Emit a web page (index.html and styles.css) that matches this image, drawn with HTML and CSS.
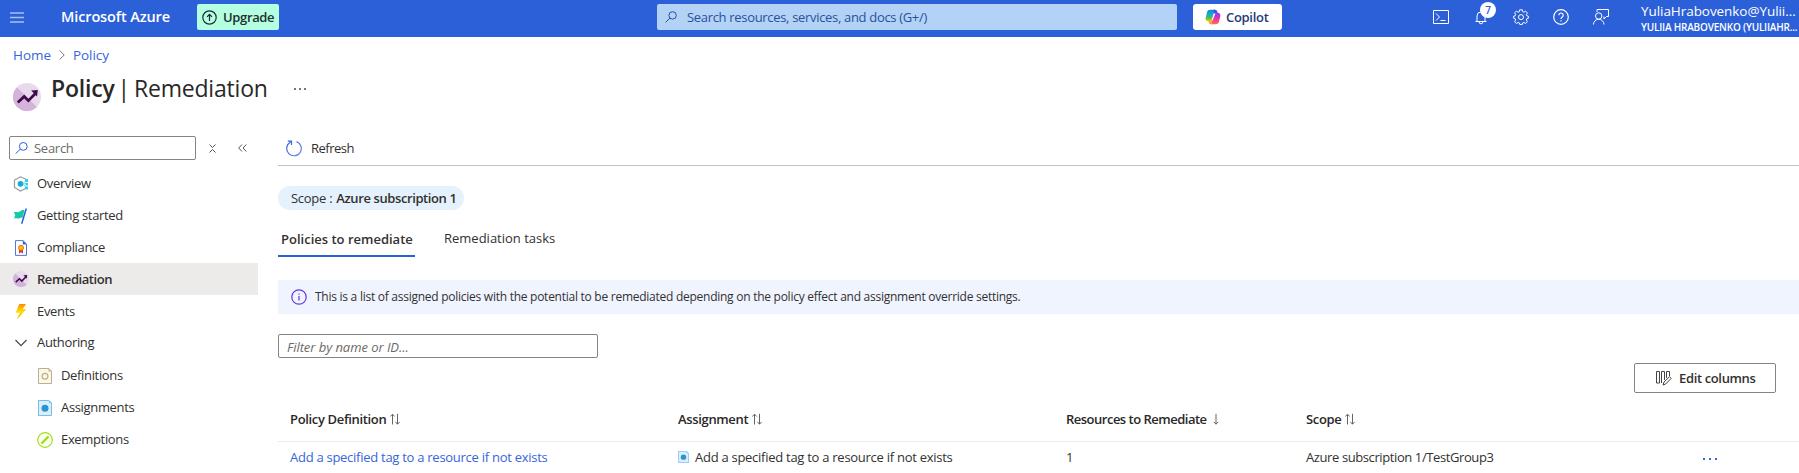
FILE: index.html
```html
<!DOCTYPE html>
<html lang="en">
<head>
<meta charset="utf-8">
<title>Policy | Remediation</title>
<link rel="stylesheet" href="styles.css">
</head>
<body>
<svg class="defs" width="0" height="0" aria-hidden="true">
  <defs>
    <linearGradient id="bolt" x1="0" y1="0" x2="0" y2="1"><stop offset="0" stop-color="#ff8c00"/><stop offset=".5" stop-color="#ffe000"/><stop offset="1" stop-color="#ffb000"/></linearGradient>
    <linearGradient id="ring" x1="0" y1="0" x2="1" y2="1"><stop offset="0" stop-color="#2b60d9"/><stop offset="1" stop-color="#7a86f0"/></linearGradient>
    <linearGradient id="cpl" x1="0" y1="0" x2="0" y2="1"><stop offset="0" stop-color="#1784e8"/><stop offset=".4" stop-color="#12b0c8"/><stop offset=".7" stop-color="#4cc04c"/><stop offset="1" stop-color="#f5c400"/></linearGradient>
    <linearGradient id="cpr" x1="0" y1="0" x2="0" y2="1"><stop offset="0" stop-color="#8a3cf0"/><stop offset=".5" stop-color="#e830b8"/><stop offset="1" stop-color="#ff7040"/></linearGradient>
    <symbol id="trend" viewBox="0 0 28 28"><circle cx="14" cy="14" r="14" fill="#e8d9ec"/><path d="M4 4.2A14 14 0 1 0 23.8 24z" fill="#d3b3da"/><path d="M4.8 19.5l6.400-6 4.200 4.200 7-7.200" fill="none" stroke="#3c0a46" stroke-width="2.700"/><path d="M18.200 7.600l6.600-.6-.8 6.600z" fill="#3c0a46"/></symbol>
    <symbol id="doc-blue" viewBox="0 0 14 16"><path d="M.5.5H11L13.500 3v12.500H.5z" fill="#dbeefa" stroke="#74bfe6"/><path d="M11 .5V3h2.500z" fill="#74bfe6"/><circle cx="7" cy="8.300" r="3.500" fill="#2c93cf"/></symbol>
    <symbol id="sort" viewBox="0 0 10 12"><path d="M2.500 11.500V1.500M.3 3.500l2.200-2.300 2.200 2.300M7.500.8v10.300M5.300 8.900l2.200 2.300 2.200-2.300" fill="none" stroke="#555" stroke-width=".9"/></symbol>
  </defs>
</svg>

<header class="topbar">
  <svg class="burger" width="14" height="11" viewBox="0 0 14 11"><path d="M0 1h14M0 5.500h14M0 10h14" stroke="#a9c0f2" stroke-width="1.600"/></svg>
  <span class="brand">Microsoft Azure</span>
  <button class="upgrade">
    <svg width="15" height="15" viewBox="0 0 15 15" fill="none" stroke="#1d2b2b" stroke-width="1.200"><circle cx="7.500" cy="7.500" r="6.700"/><path d="M7.500 11V4.500M5 6.800l2.500-2.500L10 6.800"/></svg>
    <span>Upgrade</span>
  </button>
  <div class="global-search">
    <svg width="12" height="12" viewBox="0 0 12 12" fill="none" stroke="#2c4f9c"><circle cx="7.600" cy="4.400" r="3.700"/><path d="M5 7L.6 11.400"/></svg>
    <span>Search resources, services, and docs (G+/)</span>
  </div>
  <button class="copilot">
    <svg width="16" height="16" viewBox="0 0 16 16"><path d="M5 .8h5L7.200 12.300H3.500C1.300 12.300.2 10.800.7 8.800L2.100 3C2.500 1.600 3.600.8 5 .8z" fill="url(#cpl)"/><path d="M8.500.8H10c1.300 0 2 .7 2.300 2l.4 1.500H9z" fill="#3558e0"/><path d="M11 15.200H6l3-11.500h3.500c2.200 0 3.300 1.500 2.800 3.500l-1.400 5.800c-.4 1.400-1.500 2.200-2.900 2.200z" fill="url(#cpr)"/><path d="M7.500 15.200H6c-1.300 0-2-.7-2.300-2l-.3-1h3.700z" fill="#ff9a30"/><path d="M8.700 4.500h1.700L7.600 11.600H6.500z" fill="#fff"/></svg>
    <span>Copilot</span>
  </button>
  <nav class="tools">
    <svg width="16" height="14" viewBox="0 0 16 14" fill="none" stroke="#fff"><path d="M.5.5h15v13H.5zM3 3.500L6.500 7 3 10.500M7.500 10.500h5"/></svg>
    <span class="bell">
      <svg width="12" height="15" viewBox="0 0 12 15" fill="none" stroke="#fff"><path d="M.5 11.500h11M2 11.500V6a4 4 0 0 1 8 0v5.500M4.200 12a1.800 1.800 0 0 0 3.600 0"/></svg>
      <b class="badge">7</b>
    </span>
    <svg width="16" height="16" viewBox="0 0 16 16" fill="none" stroke="#fff"><path d="M6.700.8h2.600l.4 1.900 1.200.5 1.700-1.100 1.800 1.800-1.100 1.700.5 1.200 1.500.3v2.200l-1.500.5-.5 1.200 1.100 1.700-1.800 1.800-1.700-1.100-1.200.5-.4 1.500H6.700l-.4-1.500-1.200-.5-1.700 1.100-1.800-1.800 1.100-1.700-.5-1.200L.7 9.300V7.100l1.500-.3.5-1.200-1.100-1.700 1.800-1.800 1.700 1.100 1.200-.5z"/><circle cx="8" cy="8.100" r="2.500"/></svg>
    <svg width="16" height="16" viewBox="0 0 16 16" fill="none" stroke="#fff" stroke-width="1.200"><circle cx="8" cy="8" r="7.300"/><path d="M5.800 6.300a2.200 2.200 0 1 1 3.600 1.600C8.500 8.600 8 8.900 8 10M8 11.200v1.300"/></svg>
    <svg width="16" height="16" viewBox="0 0 16 16" fill="none" stroke="#fff"><path d="M4 3V.5h11.500v7h-2L11 10V7.500M.5 15.500a5 5 0 0 1 10.500 0"/><circle cx="5.700" cy="7" r="3.200"/></svg>
  </nav>
  <div class="account"><span class="mail">YuliaHrabovenko@Yulii...</span><span class="tenant">YULIIA HRABOVENKO (YULIIAHR...</span></div>
</header>

<nav class="crumbs"><a>Home</a><svg width="6" height="10" viewBox="0 0 6 10"><path d="M.7.500L5.200 5 .7 9.500" fill="none" stroke="#777"/></svg><a>Policy</a></nav>

<div class="title-row">
  <svg class="title-icon" width="28" height="28"><use href="#trend"/></svg>
  <h1><b>Policy</b><i>|</i><span>Remediation</span></h1>
  <span class="more"><u></u><u></u><u></u></span>
</div>

<div class="body">
  <aside>
    <div class="side-search">
      <div class="box"><svg width="13" height="12" viewBox="0 0 13 12" fill="none" stroke="#2b60d9"><circle cx="8.300" cy="4.400" r="3.900"/><path d="M5.500 7L.6 11.600"/></svg><span>Search</span></div>
      <svg class="fold" width="7" height="9" viewBox="0 0 7 9" fill="none" stroke="#555"><path d="M.5.5l3 3 3-3M.5 8.500l3-3 3 3"/></svg>
      <svg class="hide" width="9" height="8" viewBox="0 0 9 8" fill="none" stroke="#555"><path d="M4 .5L.7 4 4 7.500M8.300.5L5 4l3.300 3.500"/></svg>
    </div>
    <ul class="menu">
      <li><svg width="16" height="16" viewBox="0 0 16 16"><path d="M13 3.300L7.500.8 1.500 4v7.500l6 3.500 5.500-2.800" fill="none" stroke="#999" stroke-width="1.200"/><circle cx="7.500" cy="7.800" r="2.900" fill="#16a9d6"/><path d="M10 7.800l3-3.500M10 7.800h3M10 7.800l3 3.500" stroke="#7adcf0"/><path d="M12 3h3v3h-3zM12.500 7h2.500v2.500h-2.500zM12 10.500h3v3h-3z" fill="#32d0ea"/></svg><span>Overview</span></li>
      <li><svg width="16" height="16" viewBox="0 0 16 16"><path d="M.8 4.500c2.500-1.500 4 .6 6-1 2-1.500 3-1.700 4.700-1.500L9.700 9.500c-2-.3-3 1.200-4.700 1-1.600-.2-2.500-.6-4 0L2.300 7z" fill="#14c8a8"/><path d="M13.300.5L8.700 15.700" stroke="#2b60d9" stroke-width="1.500"/></svg><span>Getting started</span></li>
      <li><svg width="16" height="16" viewBox="0 0 16 16"><path d="M2.500.6H10L13.500 4v11.400h-11z" fill="#fff" stroke="#4f78d4"/><path d="M9.800.5V4.500h4z" fill="#2b60d9"/><path d="M6 8.500v5L8 12.200l2 1.300v-5z" fill="#d13434"/><circle cx="8" cy="7.800" r="2.500" fill="#ffc400" stroke="#f06a28"/></svg><span>Compliance</span></li>
      <li class="on"><svg width="16" height="16"><use href="#trend"/></svg><span>Remediation</span></li>
      <li><svg width="16" height="16" viewBox="0 0 16 16"><path d="M6.300 0H13L9.700 5.300H13.300L3.700 15.700 6.700 8.700H2.700z" fill="url(#bolt)"/></svg><span>Events</span></li>
      <li class="group"><svg width="16" height="16" viewBox="0 0 16 16"><path d="M2.500 5L8 10.700 13.500 5" fill="none" stroke="#444" stroke-width="1.100"/></svg><span>Authoring</span></li>
      <li class="sub"><svg width="16" height="16" viewBox="0 0 16 16"><path d="M1.500.5H12L14.500 3v12.500h-13z" fill="#fff8dc" stroke="#b3b0a6"/><path d="M11.500.5V3.500h3z" fill="#b3b0a6"/><circle cx="8" cy="8.300" r="2.900" fill="none" stroke="#b3b0a6" stroke-width="1.200"/></svg><span>Definitions</span></li>
      <li class="sub"><svg width="16" height="16" viewBox="-1 0 16 16"><use href="#doc-blue" width="14" height="16"/></svg><span>Assignments</span></li>
      <li class="sub"><svg width="16" height="16" viewBox="0 0 16 16"><circle cx="8" cy="8" r="7.300" fill="#fcfff2" stroke="#a4e01c" stroke-width="1.200"/><path d="M4.500 11.500l7-7" stroke="#a0de10" stroke-width="2.400"/></svg><span>Exemptions</span></li>
    </ul>
  </aside>

  <main>
    <div class="toolbar"><svg width="16" height="17" viewBox="0 0 16 17" fill="none" stroke="url(#ring)" stroke-width="1.200"><path d="M10.500 1.600A7.300 7.300 0 1 1 4.600 2M1.800 1.200h3.700v3.700"/></svg><span>Refresh</span></div>
    <div class="pill"><span>Scope :</span><b>Azure subscription 1</b></div>
    <div class="tabs"><b>Policies to remediate</b><span>Remediation tasks</span></div>
    <div class="info"><svg width="16" height="16" viewBox="0 0 16 16" fill="none" stroke="#6238dc" stroke-width="1.200"><circle cx="8" cy="8" r="7.200"/><path d="M8 7v4.500M8 4.500v1.300"/></svg><span>This is a list of assigned policies with the potential to be remediated depending on the policy effect and assignment override settings.</span></div>
    <div class="filter"><em>Filter by name or ID...</em></div>
    <div class="actions"><button class="edit"><svg width="16" height="15" viewBox="0 0 16 15" fill="none" stroke="#444"><path d="M.5.5h3v11.500h-3zM5.500 12V.5h3V9M10.500 7V.5h3V5"/><path d="M7 14l1-3 5.500-5.300 1.700 1.700L9.700 13z" fill="#fff"/></svg><span>Edit columns</span></button></div>
    <div class="grid head">
      <div><b>Policy Definition</b><svg width="10" height="12"><use href="#sort"/></svg></div>
      <div><b>Assignment</b><svg width="10" height="12"><use href="#sort"/></svg></div>
      <div><b class="tight">Resources to Remediate</b><svg class="down" width="6" height="12" viewBox="0 0 6 12"><path d="M3 .8v10.300M.8 8.900L3 11.200l2.200-2.300" fill="none" stroke="#555" stroke-width=".9"/></svg></div>
      <div><b>Scope</b><svg width="10" height="12"><use href="#sort"/></svg></div>
    </div>
    <div class="grid row">
      <div><a>Add a specified tag to a resource if not exists</a></div>
      <div><svg class="doc" width="11" height="12" viewBox="0 0 14 16" preserveAspectRatio="none"><use href="#doc-blue" width="14" height="16"/></svg><span>Add a specified tag to a resource if not exists</span></div>
      <div><span>1</span></div>
      <div><span class="tight-scope">Azure subscription 1/TestGroup3</span></div>
      <div class="more blue"><u></u><u></u><u></u></div>
    </div>
  </main>
</div>
</body>
</html>
```
FILE: styles.css
```css
* { box-sizing: border-box; }
body { margin: 0; width: 1799px; height: 473px; overflow: hidden; background: #fff; color: #323130; font: 13px/18px "Open Sans", "Noto Sans", sans-serif; letter-spacing: -0.27px; white-space: nowrap; }
b { font-weight: 600; }
svg { flex: none; display: block; }
.defs { position: absolute; }
button { font: inherit; letter-spacing: inherit; color: inherit; border: 0; padding: 0; display: flex; align-items: center; }

.topbar { height: 37px; background: #2b60d9; display: flex; align-items: flex-start; color: #fff; }
.burger { margin: 12px 0 0 10px; }
.brand { margin: 8px 0 0 37px; width: 136px; font-weight: 600; font-size: 14.5px; letter-spacing: -0.12px; }
.upgrade { margin-top: 4px; width: 82px; height: 26px; padding-left: 5px; gap: 6px; background: #b4ffe2; border-radius: 2px; color: #20302c; font-weight: 600; letter-spacing: -0.35px; }
.global-search { margin: 4px 0 0 378px; width: 520px; height: 26px; display: flex; align-items: center; gap: 10px; padding-left: 8px; background: #b2d3f5; border-radius: 2px; color: #2c4f9c; letter-spacing: -0.32px; }
.copilot { margin: 4px 0 0 16px; width: 89px; height: 26px; padding-left: 12px; gap: 5px; background: #fff; border-radius: 3px; color: #243a78; font-weight: 600; letter-spacing: -0.3px; }
.tools { margin: 0 0 0 151px; height: 34px; display: flex; align-items: center; gap: 24px; }
.bell { position: relative; width: 16px; padding-left: 2px; }
.badge { position: absolute; left: 7px; top: -8px; width: 16px; height: 16px; border-radius: 8px; background: #fff; color: #2b60d9; font-size: 10px; line-height: 16px; text-align: center; }
.account { margin-left: 32px; display: flex; flex-direction: column; }
.mail { font-size: 13.5px; line-height: 18px; margin-top: 2px; letter-spacing: -0.06px; }
.tenant { font-size: 10px; line-height: 14px; font-weight: 600; letter-spacing: -0.2px; }

.crumbs { display: flex; align-items: center; height: 36px; padding-left: 13px; color: #3765dc; font-size: 13.5px; letter-spacing: -0.05px; }
.crumbs svg { margin: 0 8px 0 8px; }
.title-row { display: flex; height: 47px; padding-left: 13px; }
.title-icon { margin-top: 10px; }
h1 { margin: 0 0 0 10px; display: flex; font-size: 23px; font-weight: 400; line-height: 30px; letter-spacing: -0.2px; color: #292827; }
h1 i { font-style: normal; margin: 0 4px 0 3px; }
.more { display: flex; gap: 3px; margin: 15px 0 0 26px; }
.more u { width: 2px; height: 2px; background: #777; }

.body { display: flex; }
aside { width: 278px; padding-top: 16px; }
.side-search { display: flex; align-items: center; padding-left: 9px; }
.box { width: 187px; height: 24px; border: 1px solid #858482; border-radius: 2px; display: flex; align-items: center; gap: 6px; padding-left: 5px; color: #6c6a68; }
.fold { margin-left: 13px; }
.hide { margin-left: 22px; }
.menu { list-style: none; margin: 8px 0 0; padding: 0; width: 258px; letter-spacing: -0.34px; }
.menu li { height: 32px; display: flex; align-items: center; gap: 8px; padding-left: 13px; }
.menu span { padding-bottom: 2px; }
.menu .on { background: #ecebea; font-weight: 600; letter-spacing: -0.45px; margin-top: -1px; margin-bottom: 1px; }
.menu .on span { padding-bottom: 0; }
.menu .group { padding-bottom: 2px; }
.menu .sub { padding-left: 37px; }

main { flex: 1; min-width: 0; }
.toolbar { height: 46px; padding: 14px 0 1px 8px; display: flex; align-items: center; gap: 9px; border-bottom: 1px solid #c4c3c1; letter-spacing: -0.5px; }
.toolbar svg { margin-bottom: 2px; }
.toolbar span { padding-bottom: 2px; }
.pill { margin-top: 20px; width: 186px; height: 24px; border-radius: 12px; background: #e5f1fc; display: flex; align-items: center; gap: 4px; padding-left: 13px; }
.pill b { letter-spacing: -0.4px; }
.tabs { display: flex; margin-top: 18px; letter-spacing: 0; }
.tabs b { width: 137px; height: 29px; padding: 2px 0 0 3px; border-bottom: 2px solid #2b60d9; }
.tabs span { margin: 1px 0 0 29px; }
.info { margin-top: 23px; height: 34px; background: #f0f4ff; display: flex; align-items: center; gap: 8px; padding-left: 13px; font-size: 12px; letter-spacing: -0.26px; }
.info svg { margin-bottom: 1px; }
.filter { margin-top: 20px; width: 320px; height: 24px; border: 1px solid #858482; border-radius: 2px; padding: 3px 0 0 8px; color: #6c6a68; letter-spacing: -0.05px; }
.actions { margin-top: 5px; display: flex; justify-content: flex-end; padding-right: 23px; }
.edit { width: 142px; height: 30px; padding-left: 21px; gap: 7px; border: 1px solid #858482; border-radius: 2px; background: #fff; font-weight: 600; letter-spacing: -0.36px; }
.grid { display: grid; grid-template-columns: 388px 388px 240px 396px 1fr; padding-left: 12px; }
.grid > div { display: flex; align-items: center; gap: 4px; }
.head { height: 49px; padding-top: 3px; border-bottom: 1px solid #edebe9; color: #292827; letter-spacing: -0.34px; }
.tight { letter-spacing: -0.5px; }
.tight-scope { letter-spacing: -0.4px; }
.down { margin-left: 2px; }
.row { height: 29px; }
.row a { color: #3765dc; }
.doc { margin: 0 2px 0 0; }
.grid .more { gap: 4px; margin: 4px 0 0 1px; }
.blue u { background: #3765dc; }
```
